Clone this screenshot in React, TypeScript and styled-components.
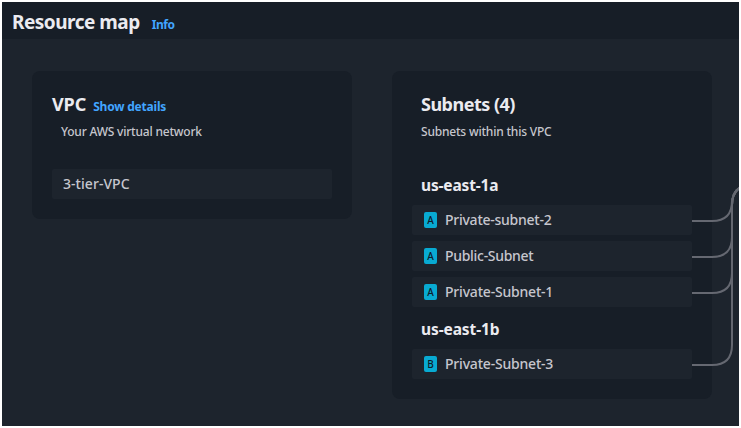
import React from "react";
import styled, { createGlobalStyle } from "styled-components";

const GlobalStyle = createGlobalStyle`
  * { box-sizing: border-box; }
  html, body { margin: 0; background: #ffffff; overflow: hidden; }
`;

type TextFit = { $spacing?: number };

const Frame = styled.main`
  position: relative;
  width: 737px;
  height: 424px;
  margin: 2px;
  overflow: hidden;
  background: #1d242d;
  color: #ebebf0;
  font-family: "Noto Sans", "Open Sans", sans-serif;
  white-space: nowrap;
`;

const Header = styled.header`
  display: flex;
  align-items: baseline;
  gap: 12px;
  height: 37px;
  padding: 6px 10px 0;
  background: #171e27;
`;

const Title = styled.h1<TextFit>`
  margin: 0;
  font-size: 19px;
  line-height: 28px;
  font-weight: 700;
  letter-spacing: ${(p) => p.$spacing ?? 0}px;
`;

const TextLink = styled.a<TextFit>`
  color: #42a5ff;
  font-size: 12px;
  line-height: 20px;
  font-weight: 700;
  letter-spacing: ${(p) => p.$spacing ?? 0}px;
`;

const Columns = styled.div`
  display: flex;
  align-items: flex-start;
  gap: 40px;
  padding: 32px 30px 0;
`;

const Panel = styled.section`
  flex: none;
  width: 320px;
  padding: 20px;
  border-radius: 8px;
  background: #171e27;
`;

const PanelHead = styled.div<{ $indent: number }>`
  display: flex;
  align-items: baseline;
  gap: 7px;
  height: 28px;
  padding-left: ${(p) => p.$indent}px;
`;

const PanelTitle = styled.h2<TextFit>`
  margin: 0;
  font-size: 18px;
  line-height: 27px;
  font-weight: 700;
  letter-spacing: ${(p) => p.$spacing ?? 0}px;
`;

const Description = styled.p<TextFit>`
  height: 20px;
  margin: 3px 0 0;
  padding-left: 9px;
  color: #c6c6cd;
  font-size: 12px;
  line-height: 20px;
  font-weight: 500;
  letter-spacing: ${(p) => p.$spacing ?? 0}px;
`;

const Zone = styled.h3<{ $first?: boolean } & TextFit>`
  height: 24px;
  margin: ${(p) => (p.$first ? "31px 0 8px" : "10px 0 8px")};
  padding-left: 9px;
  font-size: 15.5px;
  line-height: 24px;
  font-weight: 700;
  letter-spacing: ${(p) => p.$spacing ?? 0}px;
`;

const List = styled.div<{ $top?: number }>`
  display: flex;
  flex-direction: column;
  gap: 6px;
  margin-top: ${(p) => p.$top ?? 0}px;
`;

const Resource = styled.div`
  display: flex;
  align-items: center;
  gap: 8px;
  height: 30px;
  padding-left: 11px;
  border-radius: 2px;
  background: #1d242d;
`;

const ResourceName = styled.span<TextFit>`
  color: #c6c6cd;
  font-size: 14px;
  line-height: 30px;
  font-weight: 500;
  letter-spacing: ${(p) => p.$spacing ?? 0}px;
`;

const ZoneBadge = styled.span`
  flex: none;
  width: 13px;
  height: 16px;
  margin-left: 1px;
  border-radius: 2px;
  background: #08aad2;
  color: #0f1b2a;
  font-size: 10px;
  line-height: 17px;
  font-weight: 500;
  text-align: center;
`;

const Connectors = styled.svg`
  position: absolute;
  top: 0;
  left: 690px;
  width: 47px;
  height: 424px;
  fill: none;
  stroke: #656871;
  stroke-width: 2;
`;

const zones = [
  {
    name: "us-east-1a",
    letter: "A",
    spacing: -0.15,
    subnets: [
      { name: "Private-subnet-2", spacing: -0.25 },
      { name: "Public-Subnet", spacing: -0.3 },
      { name: "Private-Subnet-1", spacing: -0.2 },
    ],
  },
  {
    name: "us-east-1b",
    letter: "B",
    spacing: -0.1,
    subnets: [{ name: "Private-Subnet-3", spacing: -0.2 }],
  },
];

const rowCenters = [219, 255, 291, 363];

export default function App() {
  return (
    <>
      <GlobalStyle />
      <Frame>
        <Header>
          <Title $spacing={-0.5}>Resource map</Title>
          <TextLink $spacing={-0.4}>Info</TextLink>
        </Header>
        <Columns>
          <Panel>
            <PanelHead $indent={0}>
              <PanelTitle $spacing={-0.1}>VPC</PanelTitle>
              <TextLink $spacing={-0.2}>Show details</TextLink>
            </PanelHead>
            <Description $spacing={-0.2}>Your AWS virtual network</Description>
            <List $top={27}>
              <Resource>
                <ResourceName $spacing={0.05}>3-tier-VPC</ResourceName>
              </Resource>
            </List>
          </Panel>
          <Panel>
            <PanelHead $indent={9}>
              <PanelTitle $spacing={-0.5}>Subnets (4)</PanelTitle>
            </PanelHead>
            <Description $spacing={-0.2}>Subnets within this VPC</Description>
            {zones.map((zone, index) => (
              <React.Fragment key={zone.name}>
                <Zone $first={index === 0} $spacing={zone.spacing}>
                  {zone.name}
                </Zone>
                <List>
                  {zone.subnets.map((subnet) => (
                    <Resource key={subnet.name}>
                      <ZoneBadge>{zone.letter}</ZoneBadge>
                      <ResourceName $spacing={subnet.spacing}>{subnet.name}</ResourceName>
                    </Resource>
                  ))}
                </List>
              </React.Fragment>
            ))}
          </Panel>
        </Columns>
        <Connectors viewBox="0 0 47 424" aria-hidden="true">
          {rowCenters.map((y) => (
            <path key={y} d={`M0 ${y}H20Q40 ${y} 40 ${y - 20}V203Q40 183 60 183`} />
          ))}
        </Connectors>
      </Frame>
    </>
  );
}
